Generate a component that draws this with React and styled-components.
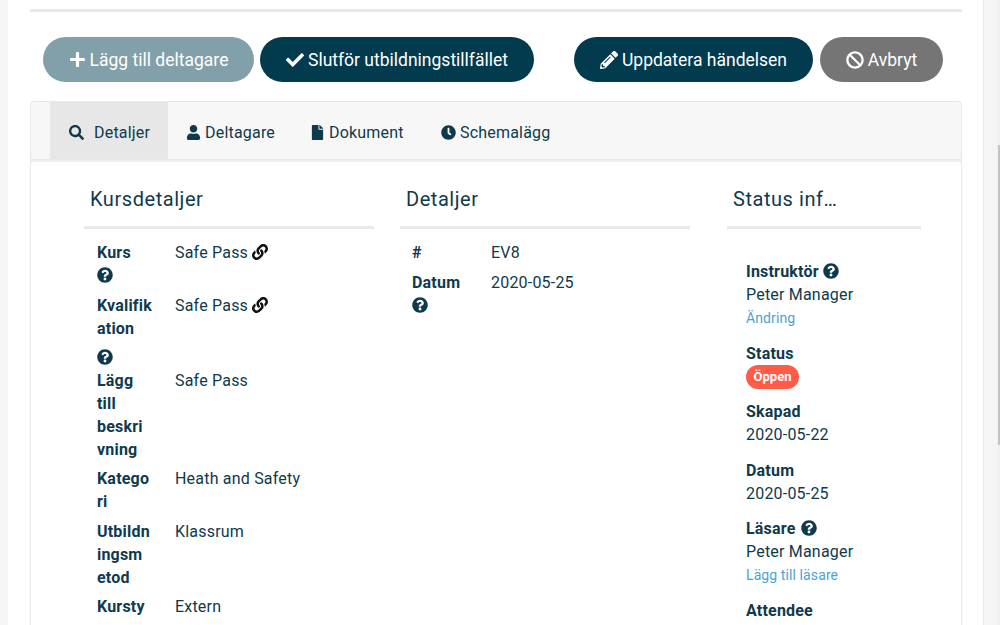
import React from "react";
import styled, { createGlobalStyle } from "styled-components";
import { FaPlus, FaCheck, FaSearch, FaUser, FaFile, FaClock, FaPencilAlt, FaBan, FaLink, FaQuestionCircle } from "react-icons/fa";

const Global = createGlobalStyle`
  html, body { margin: 0; height: 625px; overflow: hidden; background: #f5f5f5; }
  body { font-family: Roboto, "Liberation Sans", sans-serif; color: #0f3a4c; font-size: 16px; }
`;
const Page = styled.div`display: flex; height: 625px; overflow: hidden;`;
const Panel = styled.main`
  width: 976px; margin-left: 8px; background: #fff; border-right: 1px solid #e8e8ee;
  padding: 9px 21px 0 22px; box-sizing: border-box; flex: none;
`;
const Strip = styled.div`flex: 1; display: flex; justify-content: flex-end;`;
const Track = styled.div`width: 3px; background: #f0f0f0;`;
const Thumb = styled.div`width: 2px; height: 300px; margin: 145px 0 0 auto; background: #c4c4c4;`;
const TopRule = styled.div`height: 3px; background: #e8eaee;`;
const Toolbar = styled.div`display: flex; margin: 25px 0 19px 13px; height: 45px;`;
const Pill = styled.button`
  height: 45px; width: ${p => p.$w}px; margin-right: ${p => p.$mr || 0}px; border: 0; border-radius: 23px;
  background: ${p => p.$bg}; color: #fff; font: 400 17.5px Roboto, sans-serif;
  display: flex; align-items: center; justify-content: center; gap: 4px; padding: 0;
  svg { font-size: ${p => p.$icon || 16}px; }
`;
const Tabs = styled.nav`
  height: 59px; box-sizing: border-box; background: #f7f7f7; border: 1px solid #e8e8e8; border-radius: 4px 4px 0 0;
  display: flex; padding-left: 19px;
`;
const Tab = styled.div`
  display: flex; align-items: center; height: 57px; width: ${p => p.$w}px; gap: ${p => p.$gap || 4}px;
  background: ${p => p.$active ? "#e7e7e7" : "transparent"}; box-sizing: border-box; padding: 3px 0 0 ${p => p.$pl}px;
  font-size: 16px; letter-spacing: .2px; svg { font-size: 15px; flex: none; }
`;
const Card = styled.section`
  border: 1px solid #e8e8e8; border-top: 2px solid #eceef0; background: #fff; padding: 25px 0 0 53px; display: flex; height: 500px; box-sizing: border-box;
`;
const Column = styled.div`width: ${p => p.$w}px; margin-right: ${p => p.$mr || 0}px; flex: none;`;
const Heading = styled.h3`
  margin: 0; font-size: 20px; font-weight: 400; line-height: 24px; letter-spacing: .55px; padding: 0 0 15px 6px;
  border-bottom: 3px solid #e8eaee;
`;
const Table = styled.table`border-collapse: collapse; margin-top: 9px; margin-left: ${p => p.$ml}px; line-height: 23px; letter-spacing: .2px;`;
const Row = styled.tr`vertical-align: top;`;
const Label = styled.th`
  width: 55px; padding: 3.2px ${p => p.$pr || 23}px 3.2px 6px; text-align: left; font-weight: 700;
`;
const Value = styled.td`padding: 3.2px 0; svg { color: #111; font-size: 16px; vertical-align: -2px; margin-left: 4px; }`;
const HelpBlock = styled.span`display: block; height: ${p => p.$h || 23}px; padding-top: ${p => p.$pt || 0}px; svg { font-size: 16px; vertical-align: -2px; }`;
const StatusList = styled.div`padding: 31px 0 0 19px; letter-spacing: .2px; line-height: 23px;`;
const Group = styled.div`margin-bottom: ${p => p.$mb || 12}px;`;
const Term = styled.div`font-weight: 700; svg { font-size: 16px; vertical-align: -2px; margin-left: ${p => p.$iconGap || 0}px; }`;
const Link = styled.a`display: block; color: #4ba3d3; font-size: 14px; line-height: 24px; letter-spacing: .1px;`;
const Badge = styled.span`
  display: block; width: 53px; height: 24px; border-radius: 12px; background: #ff5c48; color: #fff;
  font-size: 13px; font-weight: 700; line-height: 24px; text-align: center; letter-spacing: 0;
`;

export default function App() {
  return (
    <Page>
      <Global />
      <Panel>
        <TopRule />
        <Toolbar>
          <Pill $w={211} $mr={6} $bg="#82a0aa" $icon={17}><FaPlus />Lägg till deltagare</Pill>
          <Pill $w={274} $mr={40} $bg="#023a4e" $icon={18}><FaCheck />Slutför utbildningstillfället</Pill>
          <Pill $w={239} $mr={7} $bg="#023a4e" $icon={18}><FaPencilAlt />Uppdatera händelsen</Pill>
          <Pill $w={123} $bg="#757575" $icon={18}><FaBan />Avbryt</Pill>
        </Toolbar>
        <Tabs>
          <Tab $active $w={118} $pl={19} $gap={10}><FaSearch />Detaljer</Tab>
          <Tab $w={124} $pl={18}><FaUser />Deltagare</Tab>
          <Tab $w={128} $pl={18}><FaFile />Dokument</Tab>
          <Tab $w={140} $pl={21}><FaClock />Schemalägg</Tab>
        </Tabs>
        <Card>
          <Column $w={290} $mr={26}>
            <Heading>Kursdetaljer</Heading>
            <Table $ml={7}>
              <tbody>
                <Row><Label>Kurs<HelpBlock><FaQuestionCircle /></HelpBlock></Label><Value>Safe Pass<FaLink /></Value></Row>
                <Row><Label>Kvalifik<br />ation<HelpBlock $pt={6} $h={17}><FaQuestionCircle /></HelpBlock></Label><Value>Safe Pass<FaLink /></Value></Row>
                <Row><Label>Lägg<br />till<br />beskri<br />vning</Label><Value>Safe Pass</Value></Row>
                <Row><Label>Katego<br />ri</Label><Value>Heath and Safety</Value></Row>
                <Row><Label>Utbildn<br />ingsm<br />etod</Label><Value>Klassrum</Value></Row>
                <Row><Label>Kursty<br />p</Label><Value>Extern</Value></Row>
              </tbody>
            </Table>
          </Column>
          <Column $w={290} $mr={37}>
            <Heading>Detaljer</Heading>
            <Table $ml={6}>
              <tbody>
                <Row><Label $pr={24}>#</Label><Value>EV8</Value></Row>
                <Row><Label $pr={24}>Datum<HelpBlock><FaQuestionCircle /></HelpBlock></Label><Value>2020-05-25</Value></Row>
              </tbody>
            </Table>
          </Column>
          <Column $w={194}>
            <Heading>Status inf…</Heading>
            <StatusList>
              <Group><Term>Instruktör <FaQuestionCircle /></Term><div>Peter Manager</div><Link>Ändring</Link></Group>
              <Group $mb={11}><Term>Status</Term><Badge>Öppen</Badge></Group>
              <Group $mb={13}><Term>Skapad</Term><div>2020-05-22</div></Group>
              <Group><Term>Datum</Term><div>2020-05-25</div></Group>
              <Group><Term $iconGap={1}>Läsare <FaQuestionCircle /></Term><div>Peter Manager</div><Link>Lägg till läsare</Link></Group>
              <Group><Term>Attendee</Term></Group>
            </StatusList>
          </Column>
        </Card>
      </Panel>
      <Strip><Track><Thumb /></Track></Strip>
    </Page>
  );
}
